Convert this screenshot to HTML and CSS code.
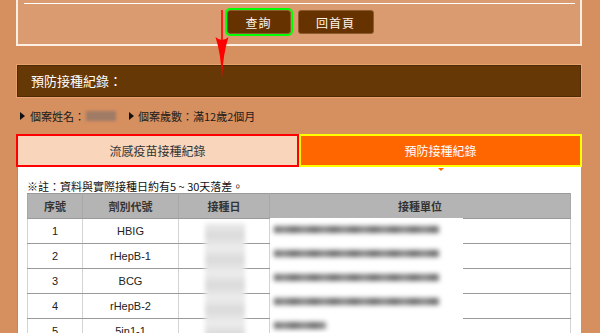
FILE: index.html
```html
<!DOCTYPE html>
<html lang="zh-TW">
<head>
  <meta charset="UTF-8">
  <title>預防接種紀錄</title>
  <link rel="stylesheet" href="styles.css">
</head>
<body>
  <div class="page">
    <div class="top-panel">
      <div class="inner-line"></div>
      <div class="buttons">
        <button class="btn btn-query">查詢</button>
        <button class="btn btn-home">回首頁</button>
      </div>
    </div>

    <div class="section-head">預防接種紀錄：</div>

    <div class="info">
      <span class="bullet"></span>
      <span>個案姓名：</span>
      <span class="name-blur"></span>
      <span class="bullet second"></span>
      <span>個案歲數：滿12歲2個月</span>
    </div>

    <div class="tabs">
      <div class="tab tab-flu">流感疫苗接種紀錄</div>
      <div class="tab tab-active">預防接種紀錄</div>
    </div>

    <div class="content">
      <p class="note">※註：資料與實際接種日約有5 ~ 30天落差。</p>
      <div class="table-wrap">
        <table class="records">
          <colgroup>
            <col class="c-no">
            <col class="c-code">
            <col class="c-date">
            <col class="c-unit">
          </colgroup>
          <tr>
            <th>序號</th>
            <th>劑別代號</th>
            <th>接種日</th>
            <th>接種單位</th>
          </tr>
          <tr><td>1</td><td>HBIG</td><td></td><td></td></tr>
          <tr><td>2</td><td>rHepB-1</td><td></td><td></td></tr>
          <tr><td>3</td><td>BCG</td><td></td><td></td></tr>
          <tr><td>4</td><td>rHepB-2</td><td></td><td></td></tr>
          <tr><td>5</td><td>5in1-1</td><td></td><td></td></tr>
        </table>

        <!-- 遮蔽個資 -->
        <div class="mask-date"></div>
        <div class="mask-unit">
          <div class="blur-line"></div>
          <div class="blur-line"></div>
          <div class="blur-line"></div>
          <div class="blur-line"></div>
          <div class="blur-line short"></div>
        </div>
      </div>
    </div>
  </div>

  <svg class="arrow" width="18" height="72" viewBox="0 0 18 72">
    <line x1="9" y1="2" x2="9" y2="34" stroke="#ff0000" stroke-width="1.6"/>
    <path d="M2.5 29 Q9 35 15.5 29 Q10 46 9 70 Q8 46 2.5 29 Z" fill="#ff0000"/>
  </svg>
</body>
</html>
```

FILE: styles.css
```css
body {
  margin: 0;
  background-color: #d68f5f;
  font-family: "Liberation Sans", "Noto Sans CJK TC", sans-serif;
  color: #222;
  position: relative;
}
.page {
  width: 600px;
  padding: 0 18px 0 16px;
  box-sizing: border-box;
}
.top-panel {
  height: 46px;
  box-sizing: border-box;
  padding-top: 3px;
  background-color: #da9b71;
  border: 2px solid #fcefe4;
  border-top: none;
}
.inner-line {
  margin: 0 5px 0 6px;
  border-top: 1px solid #fff;
}
.buttons {
  display: flex;
  justify-content: center;
  gap: 7px;
  margin-top: 6px;
  padding-left: 2px;
}
.btn {
  height: 24px;
  padding: 0;
  background-color: #663300;
  border: 1px solid #8d5a2e;
  border-radius: 3px;
  color: #fff6ea;
  font-family: "Noto Sans CJK TC", sans-serif;
  font-size: 12px;
  letter-spacing: 1px;
}
.btn-query {
  width: 64px;
  outline: 2px solid #00ff00;
}
.btn-home {
  width: 76px;
}
.section-head {
  margin: 19px 1px 0 1px;
  height: 32px;
  box-sizing: border-box;
  padding-left: 13px;
  line-height: 30px;
  background-color: #663806;
  border: 1px solid #4f2a04;
  box-shadow: 0 0 0 1px #eaa26c;
  color: #fff;
  font-family: "Noto Sans CJK TC", sans-serif;
  font-size: 13px;
}
.info {
  display: flex;
  align-items: center;
  height: 14px;
  margin: 12px 0 11px 4px;
  font-family: "Noto Sans CJK TC", sans-serif;
  font-size: 11px;
  color: #1a1a1a;
}
.bullet {
  width: 0;
  height: 0;
  border-top: 4px solid transparent;
  border-bottom: 4px solid transparent;
  border-left: 5px solid #111;
  margin-right: 5px;
}
.bullet.second {
  margin-left: 13px;
  margin-right: 4px;
}
.name-blur {
  display: inline-block;
  width: 30px;
  height: 10px;
  margin-left: 1px;
  background-color: #a07b66;
  filter: blur(1.5px);
}
.tabs {
  display: flex;
  height: 33px;
}
.tab {
  flex: 1;
  box-sizing: border-box;
  text-align: center;
  line-height: 29px;
  font-family: "Noto Sans CJK TC", sans-serif;
  font-size: 12px;
}
.tab-flu {
  background-color: #f9d6bb;
  border: 2px solid #ff0000;
  color: #333;
}
.tab-active {
  position: relative;
  background-color: #ff6600;
  border: 2px solid #ffff00;
  color: #fff;
}
.tab-active::after {
  content: "";
  position: absolute;
  left: 50%;
  bottom: -6px;
  margin-left: -3px;
  border-left: 3px solid transparent;
  border-right: 3px solid transparent;
  border-top: 3px solid #ff6600;
}
.content {
  margin-left: 1px;
  width: 564px;
  height: 166px;
  box-sizing: border-box;
  background-color: #fff;
  border-left: 1px solid #e47d38;
  padding: 12px 11px 0 9px;
}
.note {
  margin: 0;
  height: 14px;
  line-height: 14px;
  font-family: "Noto Sans CJK TC", sans-serif;
  font-size: 11px;
  color: #111;
}
.table-wrap {
  position: relative;
}
.records {
  width: 543px;
  table-layout: fixed;
  border-collapse: collapse;
  font-family: "Liberation Sans", "Noto Sans CJK TC", sans-serif;
  font-size: 11px;
}
.c-no { width: 55px; }
.c-code { width: 96px; }
.c-date { width: 91px; }
.c-unit { width: 301px; }
.records th,
.records td {
  height: 24px;
  padding: 0;
  text-align: center;
  border-left: 1px solid #d4d4d4;
  border-right: 1px solid #d4d4d4;
  border-bottom: 1px solid #9a9a9a;
}
.records th {
  background-color: #b4b4b4;
  border-top: 1px solid #9a9a9a;
  border-left-color: #a8a8a8;
  border-right-color: #a8a8a8;
  font-family: "Noto Sans CJK TC", sans-serif;
  font-weight: bold;
  color: #333;
}
.mask-date {
  position: absolute;
  left: 178px;
  top: 30px;
  width: 40px;
  height: 120px;
  background: repeating-linear-gradient(#ededed 0, #dadada 12px, #ededed 25px);
  filter: blur(2px);
}
.mask-unit {
  position: absolute;
  left: 243px;
  top: 25px;
  width: 193px;
  height: 125px;
  box-sizing: border-box;
  padding: 8px 0 0 4px;
  display: flex;
  flex-direction: column;
  gap: 17px;
  background-color: #fff;
}
.blur-line {
  width: 165px;
  height: 7px;
  flex-shrink: 0;
  background: repeating-linear-gradient(90deg, #666 0, #8a8a8a 10px, #666 20px);
  filter: blur(2.5px);
}
.blur-line.short {
  width: 52px;
}
.arrow {
  position: absolute;
  left: 213px;
  top: 8px;
}
```
